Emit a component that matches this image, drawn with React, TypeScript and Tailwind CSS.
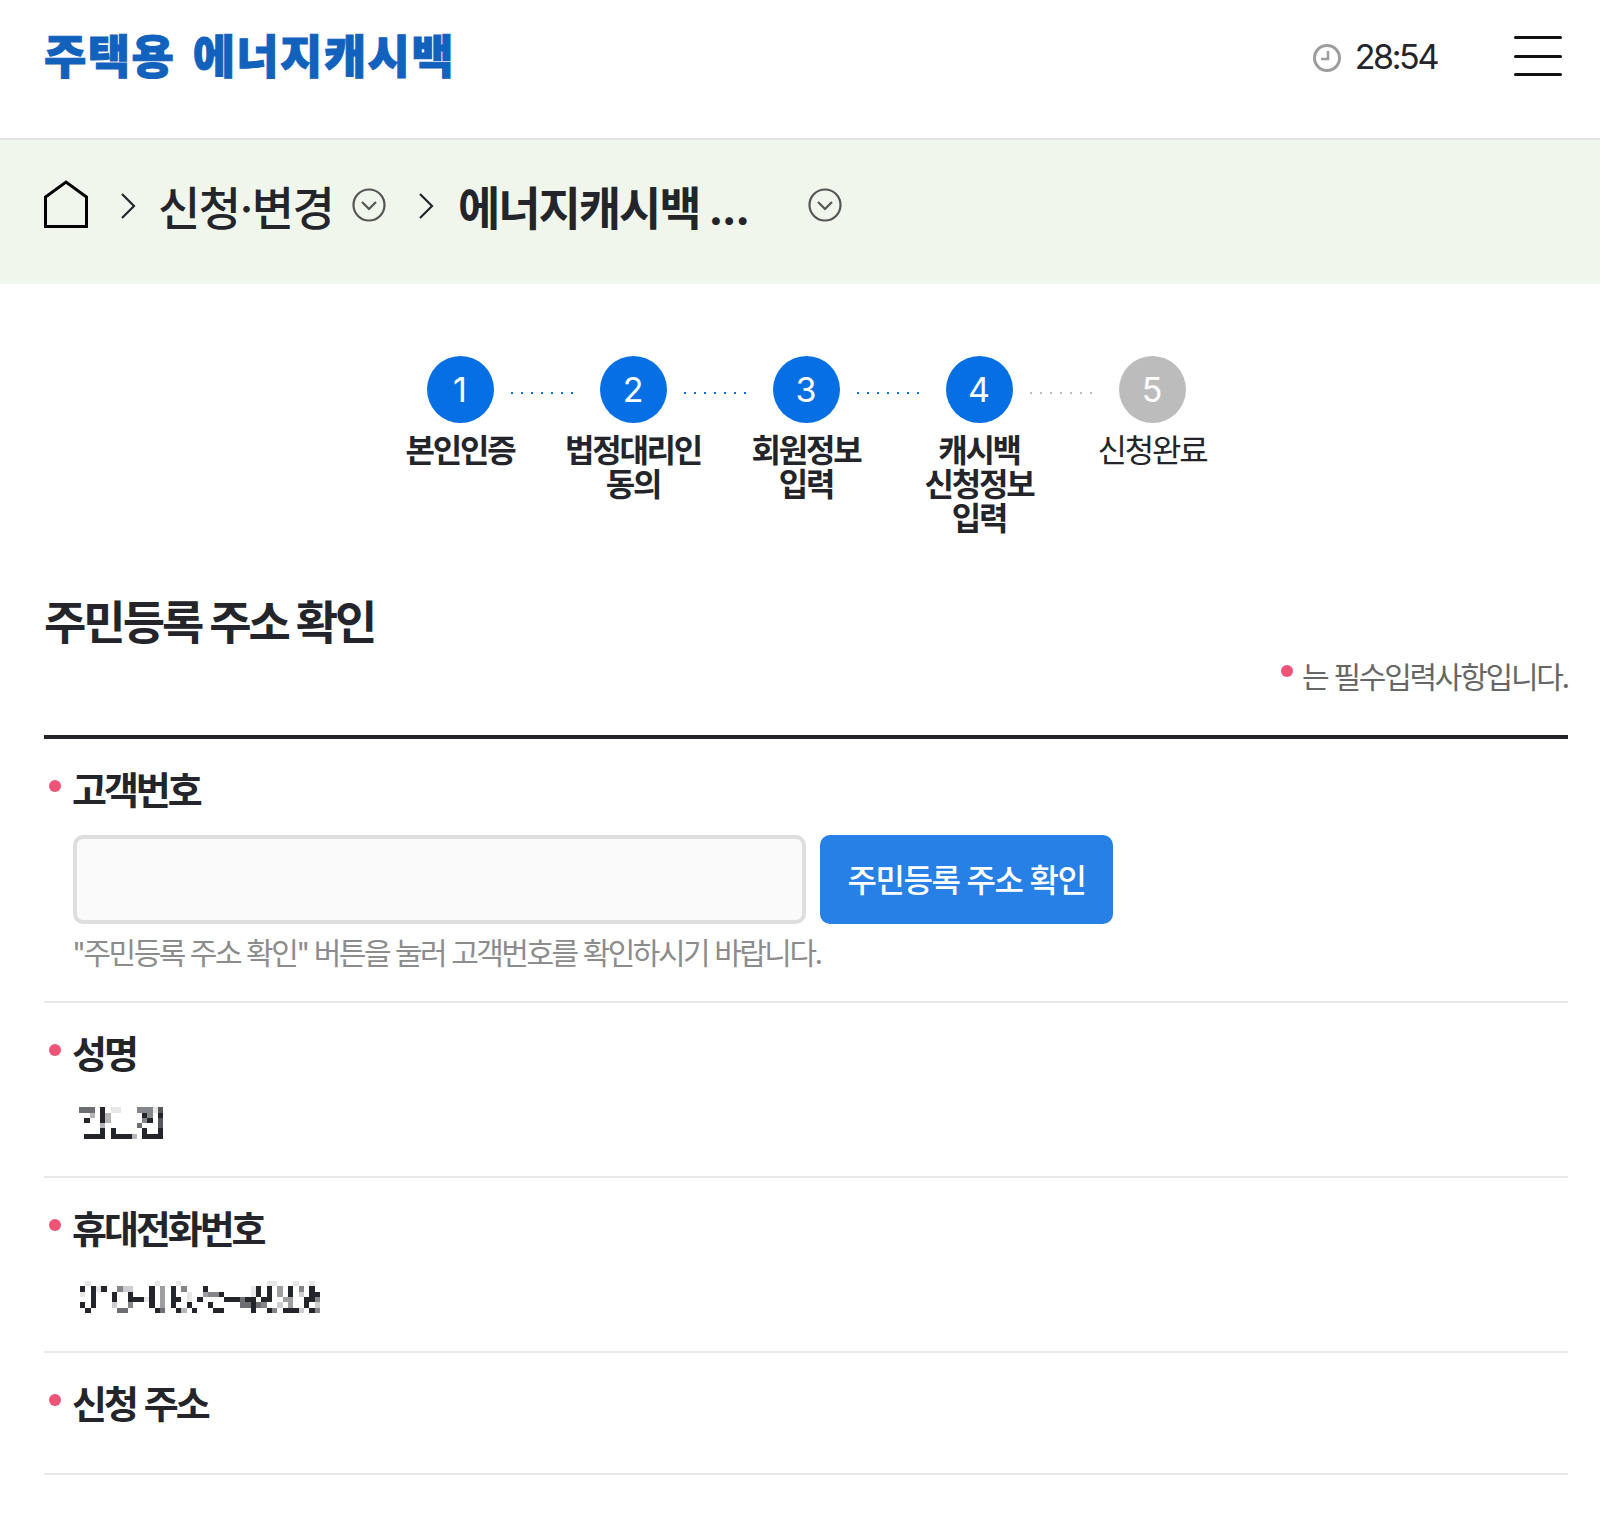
import React from "react";

const FONT = "font-['Inter','Noto_Sans_CJK_KR',sans-serif]";

const steps = [
  { no: 1, label: ["본인인증"], done: true },
  { no: 2, label: ["법정대리인", "동의"], done: true },
  { no: 3, label: ["회원정보", "입력"], done: true },
  { no: 4, label: ["캐시백", "신청정보", "입력"], done: true },
  { no: 5, label: ["신청완료"], done: false },
];

const NAME_MOSAIC = [
  "6660901100055517",
  "0030930000009509",
  "0900930000005907",
  "0000300000060007",
  "0000909000009009",
  "0999909999309999",
];

const PHONE_MOSAIC = [
  "010000000000001000100000000000000001100010010",
  "909190052200090409050009000000001909040905090",
  "109000900900090409001004559000001909040902099",
  "009000900999190409901090000999699099004400995",
  "909000200500090409009000900000669650020400902",
  "090000066000009600930900099000009009509992095",
];

function Mosaic({ rows, className }: { rows: string[]; className?: string }) {
  const cols = rows[0].length;
  return (
    <svg viewBox={`0 0 ${cols} ${rows.length}`} shapeRendering="crispEdges" className={className}>
      {rows.map((row, y) =>
        row.split("").map((v, x) =>
          v === "0" ? null : <rect key={`${x}-${y}`} x={x} y={y} width="1" height="1" fill="#23252b" fillOpacity={Number(v) / 9} />
        )
      )}
    </svg>
  );
}

function Chevron() {
  return (
    <svg width="16" height="28" viewBox="0 0 16 28" fill="none" stroke="#23252b" strokeWidth="2.2" className="mb-[2px] shrink-0">
      <path d="M2 2l12 12L2 26" />
    </svg>
  );
}

function CircleDown() {
  return (
    <svg width="34" height="34" viewBox="0 0 34 34" fill="none" stroke="#555" strokeWidth="2.2" className="mb-[4px] shrink-0">
      <circle cx="17" cy="17" r="15.5" />
      <path d="M10 14l7 7 7-7" />
    </svg>
  );
}

function Bullet() {
  return <span className="mt-[-8px] h-3 w-3 shrink-0 rounded-full bg-[#ef5478]" />;
}

function FieldLabel({ children }: { children: React.ReactNode }) {
  return (
    <div className="flex h-[44px] items-center gap-[11px] pl-[5px]">
      <Bullet />
      <span className="text-[38px] font-bold tracking-[-0.08em] [word-spacing:2px] text-[#23252b]">{children}</span>
    </div>
  );
}

export default function App() {
  return (
    <div className={`${FONT} min-h-[1518px] bg-white`}>
      {/* 상단 */}
      <header className="flex h-[140px] items-center justify-between border-b-2 border-[#e3e3e3] pl-[44px] pr-[38px] pb-[26px]">
        <span className="text-[46px] leading-none font-black tracking-[0.03em] [word-spacing:7px] text-[#1161bd] [-webkit-text-stroke:1px_#1161bd]">
          주택용 에너지캐시백
        </span>
        <div className="flex items-center">
          <svg width="30" height="30" viewBox="0 0 30 30" fill="none" stroke="#9d9d9f" strokeWidth="3" className="mt-[4px]">
            <circle cx="15" cy="15" r="12.5" />
            <path d="M16 8v8H9" strokeWidth="2.5" />
          </svg>
          <span className="ml-[13px] text-[34px] tracking-[-0.07em] text-[#23252b]">28:54</span>
          <button type="button" aria-label="메뉴" className="ml-[77px] flex h-[40px] w-[48px] flex-col justify-between">
            <span className="h-[3px] w-full rounded-full bg-[#111]" />
            <span className="h-[3px] w-full rounded-full bg-[#111]" />
            <span className="h-[3px] w-full rounded-full bg-[#111]" />
          </button>
        </div>
      </header>

      {/* 경로 */}
      <nav className="flex h-[144px] items-center bg-[#f1f6ec] pb-[10px] pl-[44px] text-[#23252b]">
        <svg width="44" height="48" viewBox="0 0 44 48" fill="none" stroke="#000" strokeWidth="3" className="mb-[6px] shrink-0">
          <path d="M1.500 46.500V17L22 2l20.500 15v29.500z" />
        </svg>
        <span className="ml-[32px] flex"><Chevron /></span>
        <span className="ml-[22px] mt-[2px] w-[176px] whitespace-nowrap text-[46px] leading-none font-medium tracking-[-0.035em]">신청·변경</span>
        <span className="ml-[18px] flex"><CircleDown /></span>
        <span className="ml-[32px] flex"><Chevron /></span>
        <span className="ml-[24px] mt-[2px] w-[350px] whitespace-nowrap text-[46px] leading-none font-bold tracking-[-0.045em]">에너지캐시백 ...</span>
        <CircleDown />
      </nav>

      <main className="pl-[44px] pr-[32px]">
        {/* 단계 */}
        <ol className="mx-auto mt-[72px] flex w-[865px] items-start">
          {steps.map((s, i) => (
            <li key={s.no} className="w-[173px] shrink-0 text-center">
              <div className="grid grid-cols-[53px_67px_53px] items-center">
                <span />
                <span className={`flex h-[67px] w-[67px] items-center justify-center rounded-full text-[34px] text-white ${s.done ? "bg-[#056fe3]" : "bg-[#bcbcbc]"}`}>
                  {s.no}
                </span>
                {i < steps.length - 1 ? (
                  <span className="ml-[17px] mt-[6px] flex w-[62px] justify-between">
                    {[0, 1, 2, 3, 4, 5, 6].map((d) => (
                      <span key={d} className={`h-[2px] w-[2px] ${s.no === 4 ? "bg-[#bcbcbc]" : "bg-[#056fe3]"}`} />
                    ))}
                  </span>
                ) : (
                  <span />
                )}
              </div>
              <div className={`mt-[11px] whitespace-nowrap text-[32px] leading-[34px] tracking-[-0.07em] text-[#23252b] ${s.done ? "font-bold" : ""}`}>
                {s.label.map((line) => (
                  <div key={line}>{line}</div>
                ))}
              </div>
            </li>
          ))}
        </ol>

        {/* 제목 */}
        <div className="mt-[58px]">
          <h2 className="text-[46px] leading-[56px] font-bold tracking-[-0.065em] text-[#23252b]">주민등록 주소 확인</h2>
          <p className="mt-[5px] flex items-center justify-end text-[30px] leading-[44px] tracking-[-0.075em] text-[#666]">
            <span className="mr-[9px] mt-[-12px] h-3 w-3 rounded-full bg-[#ef5478]" />
            는 필수입력사항입니다.
          </p>
        </div>
        <div className="mt-[36px] h-[4px] bg-[#23252b]" />

        {/* 고객번호 */}
        <section className="h-[264px] border-b-2 border-[#e8e8e8] pt-[29px]">
          <FieldLabel>고객번호</FieldLabel>
          <div className="ml-[29px] mt-[23px] flex gap-[14px]">
            <input readOnly className="h-[89px] w-[733px] rounded-[10px] border-4 border-[#dedede] bg-[#fafafa]" />
            <button type="button" className="h-[89px] w-[293px] rounded-[10px] bg-[#2680e6] pt-[2px] text-[32px] font-medium tracking-[-0.045em] text-white">
              주민등록 주소 확인
            </button>
          </div>
          <p className="ml-[28px] mt-[9px] text-[30px] leading-[40px] tracking-[-0.083em] text-[#8c8c8c]">
            "주민등록 주소 확인" 버튼을 눌러 고객번호를 확인하시기 바랍니다.
          </p>
        </section>

        {/* 성명 */}
        <section className="h-[175px] border-b-2 border-[#e8e8e8] pt-[29px]">
          <FieldLabel>성명</FieldLabel>
          <Mosaic rows={NAME_MOSAIC} className="ml-[35px] mt-[31px] h-[32px] w-[84px]" />
        </section>

        {/* 휴대전화번호 */}
        <section className="h-[175px] border-b-2 border-[#e8e8e8] pt-[29px]">
          <FieldLabel>휴대전화번호</FieldLabel>
          <Mosaic rows={PHONE_MOSAIC} className="ml-[35px] mt-[30px] h-[32px] w-[242px]" />
        </section>

        {/* 신청 주소 */}
        <section className="h-[122px] border-b-2 border-[#e8e8e8] pt-[29px]">
          <FieldLabel>신청 주소</FieldLabel>
        </section>
      </main>
    </div>
  );
}
